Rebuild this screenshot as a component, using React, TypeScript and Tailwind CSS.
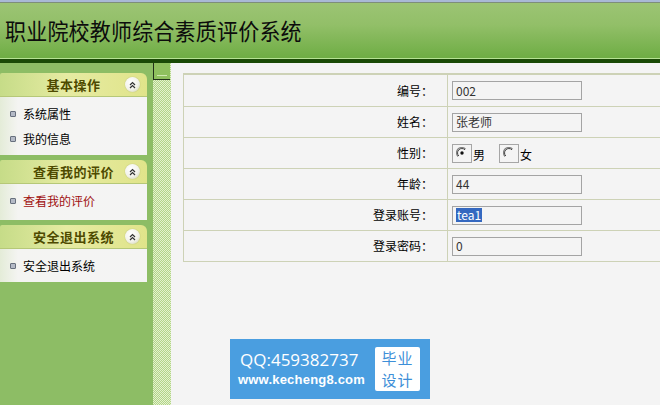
import React from 'react'

const cjk = { fontFamily: '"Noto Sans CJK SC", "Noto Sans", sans-serif' }

const menus = [
  { title: '基本操作', items: ['系统属性', '我的信息'], active: -1, bodyH: 'h-[58px]' },
  { title: '查看我的评价', items: ['查看我的评价'], active: 0, bodyH: 'h-[36px]' },
  { title: '安全退出系统', items: ['安全退出系统'], active: -1, bodyH: 'h-[33px]' },
]

function Toggle() {
  return (
    <div className="w-[15px] h-[15px] rounded-full bg-[radial-gradient(circle_at_40%_35%,#ffffff_0%,#f2f2ea_55%,#c8cca0_100%)] shadow-[0_0_1px_#9aa060] flex items-center justify-center">
      <svg width="7" height="8" viewBox="0 0 7 8" fill="none" stroke="#333" strokeWidth="1.2">
        <path d="M1 4 L3.5 1.5 L6 4" />
        <path d="M1 7 L3.5 4.5 L6 7" />
      </svg>
    </div>
  )
}

function Bullet() {
  return <span className="inline-block w-[6px] h-[6px] rounded-[1px] border border-[#68707e] bg-[#b4bac6]" />
}

function Panel({ title, items, active, bodyH }: { title: string; items: string[]; active: number; bodyH: string }) {
  return (
    <div className="w-[147px]">
      <div className="h-[24px] rounded-tr-[6px] rounded-tl-[2px] bg-[linear-gradient(to_right,#c6dc88,#e6eba2_45%,#e0e48a)] border-b border-[#b6c878] flex items-center relative">
        <span className="flex-1 text-center text-[13px] font-bold text-[#4e4a00] tracking-[0.5px]">{title}</span>
        <div className="absolute right-[7px] top-[4px]">
          <Toggle />
        </div>
      </div>
      <div className={`${bodyH} bg-[linear-gradient(to_right,#e4ecd8,#f4f4f2_18px,#f4f4f4)] pt-[4px]`}>
        {items.map((it, i) => (
          <div key={it} className="h-[25px] flex items-center gap-[7px] pl-[10px]">
            <Bullet />
            <span className={`text-[12px] ${i === active ? 'text-[#a01010]' : 'text-black'}`}>{it}</span>
          </div>
        ))}
      </div>
    </div>
  )
}

function Radio({ checked }: { checked: boolean }) {
  return (
    <div className="w-[20px] h-[19px] border border-[#a6a6a6] flex items-center justify-center">
      <svg width="12" height="12" viewBox="0 0 12 12" fill="none">
        <path d="M2 9.5 A5 5 0 0 1 9.5 2" stroke="#808080" strokeWidth="1.1" />
        <path d="M2.8 9 A4 4 0 0 1 9 2.8" stroke="#404040" strokeWidth="1" />
        {checked && <circle cx="6" cy="6" r="1.7" fill="#111" />}
      </svg>
    </div>
  )
}

function Field({ value, selected }: { value: string; selected?: boolean }) {
  return (
    <div className="w-[130px] h-[19px] border border-[#a4a4a4] bg-[#f4f4f4] flex items-center pl-[3px] text-[12px] text-[#333]">
      {selected ? <span className="bg-[#3468c0] text-white px-[1px] leading-[14px]">{value}</span> : value}
    </div>
  )
}

const rows: { label: string; node: React.ReactNode }[] = [
  { label: '编号：', node: <Field value="002" /> },
  { label: '姓名：', node: <Field value="张老师" /> },
  {
    label: '性别：',
    node: (
      <div className="flex items-center text-[12px] text-black">
        <Radio checked />
        <span className="ml-[1px] mt-[3px]">男</span>
        <div className="ml-[14px]">
          <Radio checked={false} />
        </div>
        <span className="ml-[1px] mt-[3px]">女</span>
      </div>
    ),
  },
  { label: '年龄：', node: <Field value="44" /> },
  { label: '登录账号：', node: <Field value="tea1" selected /> },
  { label: '登录密码：', node: <Field value="0" /> },
]

export default function App() {
  return (
    <div className="w-[660px] h-[405px] overflow-hidden flex flex-col bg-[#f4f4f4] relative" style={cjk}>
      {/* header */}
      <div className="h-[2px] bg-[#a9b9d6]" />
      <div className="h-[1px] bg-[#7e8e7a]" />
      <div className="h-[55px] bg-[linear-gradient(to_bottom,#9cc474,#92bf68_40%,#6ead44)] flex items-center pl-[5px]">
        <h1 className="text-[21px] leading-none text-[#0c0c0c] tracking-[0.2px] scale-y-110 origin-left">职业院校教师综合素质评价系统</h1>
      </div>
      <div className="h-[1px] bg-[#b6e294]" />
      <div className="h-[4px] bg-[#1a4a06]" />

      <div className="flex-1 flex min-h-0">
        {/* sidebar */}
        <div className="w-[153px] bg-[#8dbd65] pt-[10px] flex flex-col gap-[5px]">
          {menus.map(m => (
            <Panel key={m.title} {...m} />
          ))}
        </div>

        {/* splitter strip */}
        <div className="w-[18px] bg-[conic-gradient(#b2d488_25%,#e4f2cf_0_50%,#b2d488_0_75%,#e4f2cf_0)] bg-[length:2px_2px]">
          <div className="w-[17px] h-[17px] bg-[#8fc05e] border-l border-b border-[#22301a] flex items-end justify-center pb-[3px]">
            <div className="w-[10px] h-[1px] bg-[#cfe8b0]" />
          </div>
        </div>

        {/* content */}
        <div className="flex-1 overflow-hidden pl-[12px] pt-[10px]">
          <div className="w-[520px] border-t-[2px] border-l border-b border-[#cdd2b6]">
            {rows.map((r, i) => (
              <div
                key={r.label}
                className={`grid grid-cols-[264px_1fr] h-[31px] ${i > 0 ? 'border-t border-[#cdd2b6]' : ''}`}
              >
                <div className="flex items-center justify-end pr-[14px] border-r border-[#cdd2b6] text-[12px] text-black">
                  {r.label}
                </div>
                <div className="flex items-center pl-[4px]">{r.node}</div>
              </div>
            ))}
          </div>
        </div>
      </div>

      {/* watermark */}
      <div className="absolute left-[230px] top-[339px] w-[200px] h-[60px] bg-[#4a9ee0] flex items-center pl-[8px] pr-[10px]">
        <div className="flex-1 flex flex-col text-white">
          <span className="text-[17px] leading-[22px] pl-[2px]" style={{ fontFamily: '"Open Sans", "Noto Sans", sans-serif' }}>QQ:459382737</span>
          <span className="text-[13px] leading-[18px] font-bold tracking-[0.2px]" style={{ fontFamily: '"Liberation Sans", Arial, sans-serif' }}>www.kecheng8.com</span>
        </div>
        <div className="w-[45px] h-[44px] bg-white rounded-[2px] flex flex-col items-center justify-center text-[#3d8fd8] text-[15px] leading-[22px] tracking-[1px]">
          <span>毕业</span>
          <span>设计</span>
        </div>
      </div>
    </div>
  )
}
